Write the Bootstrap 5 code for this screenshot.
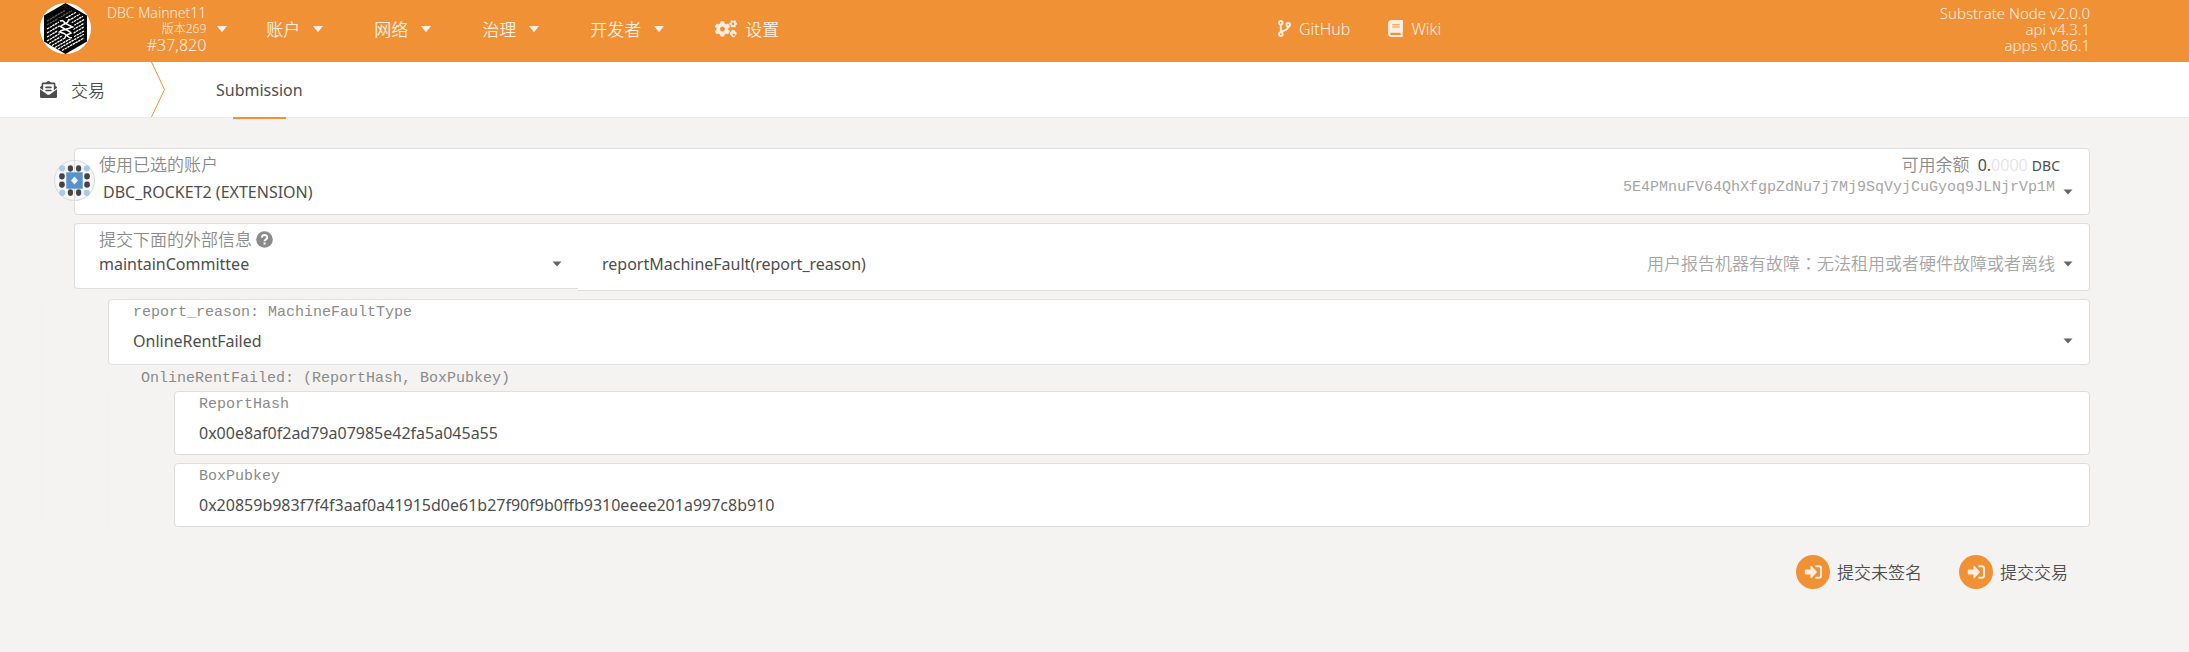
<!DOCTYPE html>
<html lang="zh-CN">
<head>
<meta charset="utf-8">
<meta name="viewport" content="width=device-width, initial-scale=1">
<title>交易 - Submission</title>
<link href="https://cdn.jsdelivr.net/npm/bootstrap@5.3.0/dist/css/bootstrap.min.css" rel="stylesheet">
<style>
:root { --brand: #f19135; --ink: #4e4e4e; --soft: #8b8b8b; --faint: #a6a6a6; --edge: #dededf; }
body { background: #f4f3f1; color: var(--ink); font: 400 16px/24px "Noto Sans", "Noto Sans CJK SC", sans-serif; }
button, input, select { font: inherit; color: inherit; }
.zh { font-size: 17px; font-weight: 350; font-family: "Noto Sans CJK SC", sans-serif; }
.mid-colon { font-family: "Noto Sans CJK TC", sans-serif; }
.code { font: 400 15px/20px "Liberation Mono", monospace; color: var(--soft); }
.faint { color: var(--faint); }
.topbar { background: var(--brand); color: #fdeee1; height: 62px; padding: 0 99px 5px 40px; font-weight: 300; }
.topbar a, .topbar button { color: inherit; text-decoration: none; white-space: nowrap; }
.topbar button { background: none; border: 0; padding: 0; }
.chain-info { font-size: 14px; line-height: 16px; }
.chain-info .release { font-size: 12px; }
.chain-info .best { font-size: 16px; }
.chain-tri { margin-left: 11px; }
.versions { font-size: 15px; line-height: 16px; white-space: nowrap; }
.tri { width: 10px; height: 6px; fill: currentColor; flex: none; }
.menus { gap: 51px; margin-left: 39px; }
.menus button { gap: 13px; }
.links { gap: 38px; }
.tabbar { background: #fff; height: 56px; border-bottom: 1px solid #ececeb; padding-left: 40px; }
.tabbar a { color: inherit; text-decoration: none; }
.tabbar .zh { gap: 14px; }
.arrow { width: 14px; height: 55px; margin: 0 51px 0 46px; fill: none; stroke: var(--brand); }
.tab-on::after { content: ""; position: absolute; left: 17px; right: 17px; bottom: -2px; height: 2px; background: var(--brand); }
main { padding: 30px 99px 24px 40px; }
.top-fields { padding-left: 34px; }
.field { background: #fff; border: 1px solid var(--edge); border-radius: 4px; padding: 3px 16px 3px 24px; }
.account { height: 67px; }
.module { height: 66px; border-right: 0; border-radius: 4px 0 0 4px; }
.method { height: 68px; border-left: 0; border-radius: 0 4px 4px 0; padding-top: 27px; }
.reason { height: 66px; }
.param { height: 64px; }
.label { color: var(--soft); line-height: 24px; }
.balance { color: var(--ink); margin-right: 13px; }
.balance .zeros { color: #ddd; font-weight: 300; }
.balance .unit { font-size: 14px; }
.overlay { display: grid; align-items: start; }
.overlay > * { grid-area: 1 / 1; }
.overlay > .hint { justify-self: end; margin-right: 18px; pointer-events: none; }
.pick { appearance: none; border: 0; width: 100%; height: 26px; padding: 0; outline-color: var(--brand);
  background: transparent url("data:image/svg+xml,%3Csvg xmlns='http://www.w3.org/2000/svg' viewBox='0 0 10 6'%3E%3Cpath d='M.5.5h9L5 5.5z' fill='%23666'/%3E%3C/svg%3E") no-repeat right center / 10px 6px; }
.account .pick { height: 28px; }
.reason .pick, .entry { height: 36px; }
.entry { border: 0; width: 100%; padding: 0; background: none; outline-color: var(--brand); }
.identicon { position: absolute; left: -21px; top: 11px; width: 41px; height: 41px; }
.nest { border-left: 2px solid #f1f2f2; margin-left: 31px; }
.nest-first { margin-left: 1px; }
.indent { padding-left: 65px; }
.caption { padding-bottom: 2px; }
.actions { gap: 37px; padding: 28px 22px 0 0; }
.go { background: none; border: 0; padding: 0; gap: 7px; }
.go svg { width: 34px; height: 34px; }
</style>
</head>
<body>
<svg width="0" height="0" class="position-absolute" aria-hidden="true">
  <symbol id="tri" viewBox="0 0 10 6"><path d="M0 0h10L5.700 5.500q-.7.7-1.400 0z"/></symbol>
  <symbol id="enter" viewBox="0 0 34 34"><circle cx="17" cy="17" r="17" fill="#f19135"/><path d="M9.500 14.500h5v-3q0-1.200 1-.5l5 5.300q.5.700 0 1.400l-5 5.300q-1 .7-1-.5v-3h-5q-.7 0-.7-.8v-3.400q0-.8.7-.8z" fill="#fdeee1"/><path d="M19.500 11.300h3.500q2 0 2 2v7.400q0 2-2 2h-3.500" fill="none" stroke="#fdeee1" stroke-width="2"/></symbol>
</svg>

<header class="topbar d-flex justify-content-between align-items-center">
  <div class="d-flex align-items-center">
    <button type="button" class="d-flex align-items-center">
      <svg width="51" height="51" viewBox="0 0 51 51" class="me-3" aria-label="DBC">
        <circle cx="25.500" cy="25.500" r="25.500" fill="#fff"/>
        <path d="M25.500 0 47 12.500v26L25.500 51 4 38.500v-26z" fill="#050505"/>
        <g stroke="#fff" stroke-width="1.300" stroke-dasharray="2.500 .6">
          <path d="M7 18 25 7.500M7 22 32 7.500" opacity=".35"/><path d="M7 26 36 9.200M7 30 40 11M7 34 43 13.200M7 38 44 16.600M9 40.500 44 20.300M12 42.500 44 24M15 44.500 44 28M18 46 44 31.200M22 47.500 44 35"/>
        </g>
        <path d="M18 15h9l8 8-2 4 1 9h-8l-9-8 3-4z" fill="#050505"/>
        <path d="M20 18l2.500-.5q3 3.500 6 4.500l4 2-4 1.500-7 2-2 1.500 4.500 1.500 6 4.500 2-.5M29 16l-1.500 3.500-4 2-3 2 3.500 2 5.500 3 1.500 1.500-5 2.500-1.500 3" fill="none" stroke="#fff" stroke-width="1.500"/>
      </svg>
      <span class="chain-info text-end d-block"><span class="d-block">DBC Mainnet11</span><span class="d-block release">版本269</span><span class="d-block best">#37,820</span></span>
      <svg class="tri chain-tri" aria-hidden="true"><use href="#tri"/></svg>
    </button>
    <nav class="menus d-flex zh">
      <button type="button" class="d-flex align-items-center">账户<svg class="tri"><use href="#tri"/></svg></button>
      <button type="button" class="d-flex align-items-center">网络<svg class="tri"><use href="#tri"/></svg></button>
      <button type="button" class="d-flex align-items-center">治理<svg class="tri"><use href="#tri"/></svg></button>
      <button type="button" class="d-flex align-items-center">开发者<svg class="tri"><use href="#tri"/></svg></button>
      <a href="#settings" class="d-flex align-items-center gap-2"><svg width="22" height="18" viewBox="0 0 640 512" fill="currentColor" aria-hidden="true"><path d="M512.100 191l-8.200 14.300c-3 5.300-9.400 7.500-15.100 5.400-11.800-4.400-22.600-10.700-32.100-18.600-4.600-3.800-5.800-10.500-2.800-15.700l8.200-14.300c-6.900-8-12.300-17.300-15.900-27.400h-16.500c-6 0-11.200-4.300-12.200-10.300-2-12-2.100-24.600 0-37.100 1-6 6.200-10.400 12.200-10.400h16.500c3.600-10.100 9-19.400 15.900-27.400l-8.200-14.300c-3-5.200-1.900-11.900 2.800-15.700 9.500-7.900 20.400-14.200 32.100-18.600 5.700-2.100 12.100.1 15.100 5.400l8.200 14.300c10.500-1.900 21.200-1.900 31.700 0L552 6.300c3-5.300 9.400-7.500 15.100-5.400 11.800 4.400 22.600 10.700 32.100 18.600 4.600 3.800 5.800 10.500 2.800 15.700l-8.200 14.300c6.900 8 12.300 17.300 15.900 27.400h16.500c6 0 11.200 4.300 12.200 10.300 2 12 2.100 24.600 0 37.100-1 6-6.200 10.400-12.200 10.400h-16.500c-3.600 10.100-9 19.400-15.900 27.400l8.200 14.300c3 5.200 1.900 11.900-2.800 15.700-9.500 7.900-20.400 14.200-32.100 18.600-5.700 2.100-12.100-.1-15.100-5.400l-8.200-14.300c-10.400 1.900-21.200 1.900-31.700 0zm-10.500-58.800c38.500 29.600 82.400-14.300 52.800-52.800-38.500-29.700-82.400 14.300-52.800 52.800zM386.300 286.100l33.700 16.800c10.100 5.800 14.500 18.100 10.500 29.100-8.900 24.200-26.400 46.400-42.600 65.800-7.400 8.900-20.200 11.100-30.300 5.300l-29.100-16.800c-16 13.700-34.600 24.600-54.900 31.700v33.600c0 11.600-8.300 21.600-19.700 23.600-24.600 4.200-50.400 4.400-75.900 0-11.500-2-20-11.900-20-23.600V418c-20.300-7.200-38.900-18-54.900-31.700L74 403c-10 5.800-22.900 3.600-30.300-5.300-16.200-19.400-33.300-41.600-42.200-65.700-4-10.900.4-23.200 10.500-29.100l33.300-16.800c-3.900-20.900-3.900-42.400 0-63.400L12 205.800c-10.100-5.800-14.600-18.100-10.500-29 8.900-24.200 26-46.400 42.200-65.800 7.400-8.900 20.200-11.100 30.300-5.300l29.100 16.800c16-13.700 34.600-24.600 54.900-31.700V57.100c0-11.500 8.200-21.500 19.600-23.500 24.600-4.200 50.500-4.400 76-.1 11.500 2 20 11.900 20 23.600v33.600c20.300 7.200 38.900 18 54.900 31.700l29.100-16.800c10-5.800 22.900-3.600 30.300 5.300 16.200 19.400 33.200 41.600 42.100 65.800 4 10.900.1 23.200-10 29.100l-33.700 16.800c3.900 21 3.900 42.500 0 63.500zm-117.600 21.100c59.200-77-28.700-164.900-105.700-105.700-59.200 77 28.700 164.900 105.700 105.700zM512.100 503l-8.200-14.300-31.700-29-10.300-30-29-18.200v-48l29-18.200 10.300-30 31.700-29h56l24 22 16 34 29 18v52l-29 18-16 34-24 22zm10-57c38 30 82-14 52.300-52.700-38.500-29.700-82.400 14.300-52.300 52.700z" fill-rule="evenodd"/></svg>设置</a>
    </nav>
  </div>
  <nav class="links d-flex">
    <a href="#github" class="d-flex align-items-center gap-2"><svg width="13" height="17" viewBox="0 0 13 17" fill="none" stroke="currentColor" stroke-width="1.900" aria-hidden="true"><circle cx="2.800" cy="2.800" r="1.800"/><circle cx="2.800" cy="14.200" r="1.800"/><circle cx="10.200" cy="4.800" r="1.800"/><path d="M2.800 4.600v7.800M10.200 6.600c0 4-3.500 3.600-7.400 5"/></svg>GitHub</a>
    <a href="#wiki" class="d-flex align-items-center gap-2"><svg width="15" height="17" viewBox="0 0 448 512" fill="currentColor" aria-hidden="true"><path d="M448 360V24c0-13.300-10.700-24-24-24H96C43 0 0 43 0 96v320c0 53 43 96 96 96h328c13.300 0 24-10.700 24-24v-16c0-7.500-3.500-14.300-8.900-18.700-4.200-15.400-4.200-59.300 0-74.700 5.400-4.300 8.900-11.100 8.900-18.600zM128 134c0-3.300 2.700-6 6-6h212c3.300 0 6 2.700 6 6v20c0 3.300-2.700 6-6 6H134c-3.300 0-6-2.700-6-6v-20zm0 64c0-3.300 2.700-6 6-6h212c3.300 0 6 2.700 6 6v20c0 3.300-2.700 6-6 6H134c-3.300 0-6-2.700-6-6v-20zm253.400 250H96c-17.700 0-32-14.300-32-32 0-17.600 14.400-32 32-32h285.400c-1.900 17.100-1.900 46.900 0 64z"/></svg>Wiki</a>
  </nav>
  <div class="versions text-end"><div>Substrate Node v2.0.0</div><div>api v4.3.1</div><div>apps v0.86.1</div></div>
</header>

<nav class="tabbar d-flex align-items-center">
  <a href="#tx" class="d-flex align-items-center zh"><svg width="17" height="17" viewBox="0 0 512 512" fill="currentColor" aria-hidden="true"><path d="M176 216h160c8.800 0 16-7.200 16-16v-16c0-8.800-7.200-16-16-16H176c-8.800 0-16 7.200-16 16v16c0 8.800 7.200 16 16 16zm-16 80c0 8.800 7.200 16 16 16h160c8.800 0 16-7.200 16-16v-16c0-8.800-7.200-16-16-16H176c-8.800 0-16 7.200-16 16zm96 121.100c-16.400 0-32.800-5.100-46.900-15.200L0 250.900V464c0 26.500 21.500 48 48 48h416c26.500 0 48-21.500 48-48V250.900l-209.100 151c-14.100 10.200-30.500 15.200-46.900 15.200zm237.600-254.200c-8.900-6.900-17.200-13.500-29.600-22.800V96c0-26.500-21.500-48-48-48h-77.600c-3-2.200-5.900-4.300-9-6.600C312.600 29.200 279.200-.4 256 0c-23.200-.4-56.600 29.200-73.400 41.400-3.200 2.300-6 4.400-9 6.600H96c-26.500 0-48 21.500-48 48v44.100c-12.400 9.300-20.800 15.800-29.600 22.800A48 48 0 0 0 0 200.700v10.700l96 69.400V96h320v184.700l96-69.400v-10.700c0-14.700-6.800-28.700-18.400-37.700z"/></svg>交易</a>
  <svg class="arrow" viewBox="0 0 14 55" aria-hidden="true"><path d="M.5 0 13.500 27.500.5 55"/></svg>
  <a href="#submission" class="tab-on position-relative h-100 d-flex align-items-center">Submission</a>
</nav>

<main>
  <section class="top-fields">
    <div class="field account position-relative mb-2">
      <svg class="identicon" viewBox="0 0 40 40" aria-hidden="true"><circle cx="20" cy="20" r="19.500" fill="#f6f6f6" stroke="#ddd"/><path d="M20 0v40" stroke="#ddd"/><path d="M12 12h16v16H12z" fill="#5792cc"/><path d="m20 16 3.500 4-3.500 4-3.500-4z" fill="#eee"/>
        <g fill="#444"><rect x="13.500" y="5" width="5" height="6.500" rx="2.400"/><rect x="21.500" y="5" width="5" height="6.500" rx="2.400"/><rect x="13.500" y="28.500" width="5" height="6.500" rx="2.400"/><rect x="21.500" y="28.500" width="5" height="6.500" rx="2.400"/><rect x="5" y="13" width="5.500" height="6" rx="2.400"/><rect x="5" y="21" width="5.500" height="6" rx="2.400"/><rect x="29.500" y="13" width="5.500" height="6" rx="2.400"/><rect x="29.500" y="21" width="5.500" height="6" rx="2.400"/></g>
        <g fill="#abc9e8"><circle cx="8" cy="8" r="3"/><circle cx="32" cy="8" r="3"/><circle cx="8" cy="32" r="3"/><circle cx="32" cy="32" r="3"/></g></svg>
      <div class="d-flex justify-content-between label">
        <label for="account" class="zh">使用已选的账户</label>
        <div class="balance"><span class="zh label me-1">可用余额</span> 0.<span class="zeros">0000</span> <span class="unit">DBC</span></div>
      </div>
      <div class="overlay">
        <select id="account" class="pick ps-1"><option>DBC_ROCKET2 (EXTENSION)</option></select>
        <span class="hint code faint">5E4PMnuFV64QhXfgpZdNu7j7Mj9SqVyjCuGyoq9JLNjrVp1M</span>
      </div>
    </div>
    <div class="d-flex mb-2">
      <div class="field module w-25">
        <label for="module" class="label zh d-flex align-items-center">提交下面的外部信息<svg width="17" height="17" viewBox="0 0 17 17" class="ms-1" aria-hidden="true"><circle cx="8.500" cy="8.500" r="8.300" fill="#8b8b8b"/><path d="M5.800 6.600c.2-3.600 5.700-3.200 5.500 0-.1 1.900-2.700 1.700-2.700 3.700M8.600 11.500v2" fill="none" stroke="#fff" stroke-width="2"/></svg></label>
        <select id="module" class="pick d-block"><option>maintainCommittee</option></select>
      </div>
      <div class="field method flex-grow-1 overlay">
        <select class="pick" aria-label="call"><option>reportMachineFault(report_reason)</option></select>
        <span class="hint zh faint">用户报告机器有故障<span class="mid-colon" lang="zh-TW">：</span>无法租用或者硬件故障或者离线</span>
      </div>
    </div>
  </section>
  <section class="nest nest-first">
    <div class="indent">
      <div class="field reason"><label for="reason" class="code d-block">report_reason: MachineFaultType</label><select id="reason" class="pick d-block"><option>OnlineRentFailed</option></select></div>
    </div>
    <div class="nest mt-1">
      <div class="code indent caption">OnlineRentFailed: (ReportHash, BoxPubkey)</div>
      <div class="nest indent">
        <div class="field param mb-2"><label for="hash" class="code d-block">ReportHash</label><input id="hash" class="entry d-block" value="0x00e8af0f2ad79a07985e42fa5a045a55"></div>
        <div class="field param"><label for="key" class="code d-block">BoxPubkey</label><input id="key" class="entry d-block" value="0x20859b983f7f4f3aaf0a41915d0e61b27f90f9b0ffb9310eeee201a997c8b910"></div>
      </div>
    </div>
  </section>
  <div class="actions d-flex justify-content-end zh">
    <button type="button" class="go d-flex align-items-center"><svg aria-hidden="true"><use href="#enter"/></svg>提交未签名</button>
    <button type="button" class="go d-flex align-items-center"><svg aria-hidden="true"><use href="#enter"/></svg>提交交易</button>
  </div>
</main>
<script src="https://cdn.jsdelivr.net/npm/bootstrap@5.3.0/dist/js/bootstrap.bundle.min.js"></script>
</body>
</html>
